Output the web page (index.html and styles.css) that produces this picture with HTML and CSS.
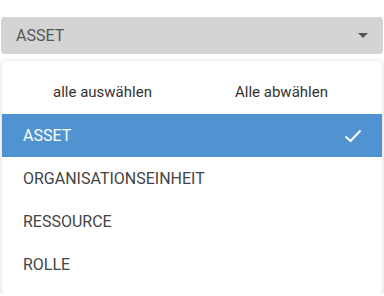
FILE: index.html
```html
<!DOCTYPE html>
<html>
<head>
<meta charset="utf-8">
<link rel="stylesheet" href="styles.css">
</head>
<body>
<div class="wrap">
  <div class="select">
    <span class="select-label">ASSET</span>
    <span class="caret"></span>
  </div>
  <div class="menu">
    <div class="actions">
      <span class="action">alle auswählen</span>
      <span class="action">Alle abwählen</span>
    </div>
    <ul class="options">
      <li class="option selected"><span>ASSET</span>
        <svg class="check" width="18" height="14" viewBox="0 0 18 14"><path d="M1.5 7.5 L6.5 12 L16.5 1.5" fill="none" stroke="#fff" stroke-width="2"/></svg>
      </li>
      <li class="option"><span>ORGANISATIONSEINHEIT</span></li>
      <li class="option"><span>RESSOURCE</span></li>
      <li class="option"><span>ROLLE</span></li>
    </ul>
  </div>
</div>
</body>
</html>
```

FILE: styles.css
```css
html, body {
  margin: 0;
  padding: 0;
  background: #fff;
}
body {
  font-family: Roboto, "Liberation Sans", sans-serif;
}
.wrap {
  padding: 17px 1px 0 1px;
}
.select {
  height: 37px;
  background: #d4d4d4;
  border-radius: 3px;
  display: flex;
  align-items: center;
  justify-content: space-between;
  padding: 0 15px 0 15px;
  color: #555;
  font-size: 16px;
}
.caret {
  width: 0;
  height: 0;
  border-left: 5px solid transparent;
  border-right: 5px solid transparent;
  border-top: 5px solid #555;
}
.menu {
  margin: 7px 1px 0 1px;
  background: #fff;
  border-radius: 3px;
  box-shadow: 0 1px 4px rgba(0,0,0,0.2);
  padding: 0 0 8px 0;
}
.actions {
  height: 53px;
  display: grid;
  grid-template-columns: 1fr 1fr;
  align-items: center;
  justify-items: center;
  font-size: 15px;
  color: #333;
  padding: 8px 11px 0 11px;
  box-sizing: border-box;
}
.options {
  list-style: none;
  margin: 0;
  padding: 0;
}
.option {
  height: 43px;
  display: flex;
  align-items: center;
  justify-content: space-between;
  padding: 0 20px 0 21px;
  font-size: 16px;
  color: #444;
}
.option.selected {
  background: #4f93d0;
  color: #fff;
}
.check {
  display: block;
}
```
